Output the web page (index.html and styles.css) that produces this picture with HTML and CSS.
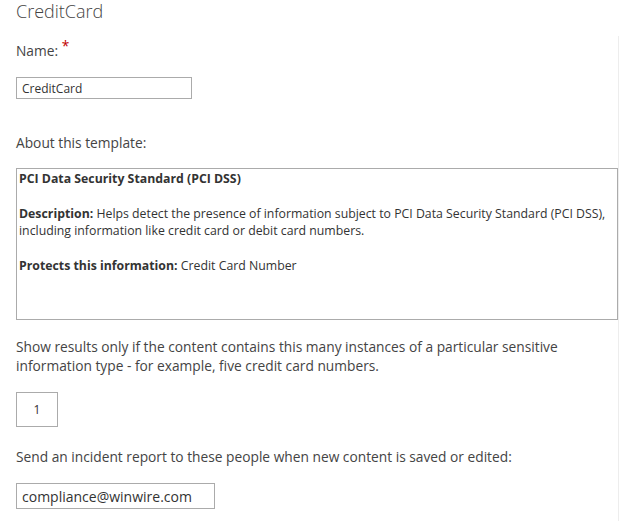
FILE: index.html
```html
<!DOCTYPE html>
<html lang="en">
<head>
<meta charset="utf-8">
<title>CreditCard</title>
<link rel="stylesheet" href="styles.css">
</head>
<body>
<div class="edge"></div>
<main class="form">
  <h1 class="title">CreditCard</h1>
  <div class="label">Name: <span class="req">*</span></div>
  <div class="input name-input">CreditCard</div>
  <div class="label about">About this template:</div>
  <div class="about-box">
    <p class="strong">PCI Data Security Standard (PCI DSS)</p>
    <p><b>Description:</b> Helps detect the presence of information subject to PCI Data Security Standard (PCI DSS), including information like credit card or debit card numbers.</p>
    <p><b>Protects this information:</b> Credit Card Number</p>
  </div>
  <div class="label show">Show results only if the content contains this many instances of a particular sensitive information type - for example, five credit card numbers.</div>
  <div class="input count-input">1</div>
  <div class="label send">Send an incident report to these people when new content is saved or edited:</div>
  <div class="input email-input">compliance@winwire.com</div>
</main>
</body>
</html>
```

FILE: styles.css
```css
html, body {
  margin: 0;
  padding: 0;
  background: #ffffff;
}
body {
  font-family: "Open Sans", "Noto Sans", sans-serif;
  color: #444444;
  width: 619px;
  height: 521px;
  overflow: hidden;
  position: relative;
}
.edge {
  position: absolute;
  left: 618px;
  top: 36px;
  bottom: 0;
  width: 1px;
  background: #ededed;
}
.form {
  padding-left: 16px;
  display: flex;
  flex-direction: column;
  align-items: flex-start;
}
.title {
  margin: 0;
  font-size: 18px;
  font-weight: 300;
  line-height: 22px;
  color: #444444;
}
.label {
  font-size: 13.75px;
  line-height: 19px;
  color: #444444;
}
.label:first-of-type {
  margin-top: 19px;
}
.req {
  color: #c00000;
  position: relative;
  top: -5px;
}
.input {
  box-sizing: border-box;
  border: 1px solid #ababab;
  font-size: 12px;
  color: #333333;
  display: flex;
  align-items: center;
}
.name-input {
  margin-top: 17px;
  width: 176px;
  height: 22px;
  padding-left: 5px;
}
.about {
  margin-top: 34px;
}
.about-box {
  box-sizing: border-box;
  margin-top: 16px;
  width: 602px;
  height: 152px;
  border: 1px solid #ababab;
  padding: 1px 2px 0 2px;
  font-size: 12.3px;
  line-height: 17px;
  color: #333333;
}
.about-box p {
  margin: 0 0 18px 0;
}
.about-box .strong {
  font-weight: 700;
}
.show {
  margin-top: 17px;
  width: 560px;
}
.count-input {
  margin-top: 17px;
  width: 42px;
  height: 35px;
  justify-content: center;
}
.send {
  margin-top: 20px;
}
.email-input {
  margin-top: 17px;
  width: 199px;
  height: 26px;
  padding-left: 5px;
  font-size: 14px;
}
```
